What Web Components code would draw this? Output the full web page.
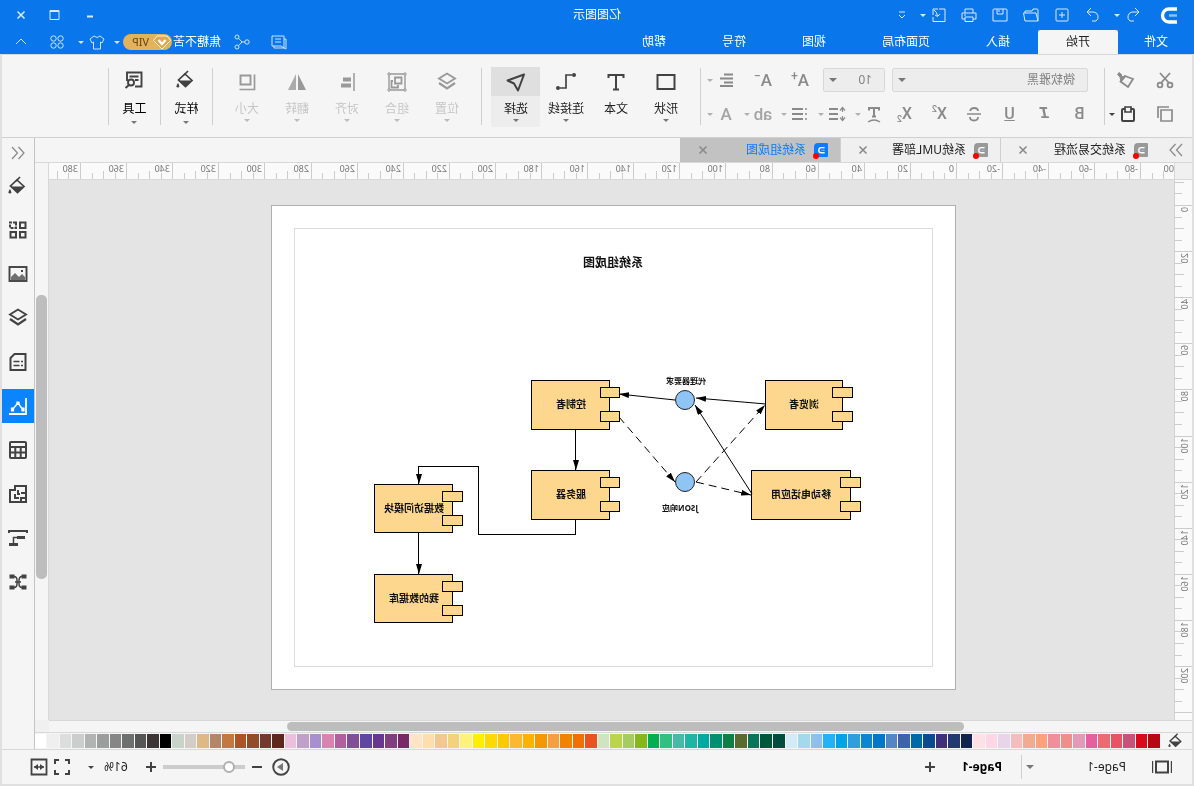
<!DOCTYPE html>
<html lang="zh-CN">
<head>
<meta charset="utf-8">
<title>亿图图示</title>
<style>
html, body { margin: 0; height: 100%; }
body { font: 12px/16px "Noto Sans", "Noto Sans CJK SC", sans-serif; color: #222; background: #f5f5f5; overflow: hidden; }
</style>
</head>
<body>
<diagram-app></diagram-app>
<script>
const ICONS = {
  logo: '<path d="M1 4H9a6 6 0 0 1 0 13H1" stroke="#fff" stroke-width="3.4"/><path d="M1 10.500h8" stroke="#8cc4fb" stroke-width="2.400"/>',
  undo: '<path d="M8 3L4 7l4 4M4 7h7a5 5 0 0 1 2 9H9"/>',
  redo: '<path d="M12 3l4 4-4 4M16 7H9a5 5 0 0 0-2 9h4"/>',
  plusbox: '<rect x="4" y="4" width="12" height="12" rx="1"/><path d="M10 7v6M7 10h6"/>',
  open: '<path d="M3 16V5q0-1 1-1h4l1 2h7v2M3 16L5 8h12.500L16 16z"/>',
  save: '<path d="M4 4h12q1 0 1 1v11H3V5q0-1 1-1zM7 4v5h6V4M11 5v2"/>',
  print: '<path d="M6 8V4h8v4M6 14H3V8h14v6h-3M6 12h8v4.500H6zM13 10h2"/>',
  exportbox: '<path d="M10 4H4v12.500h12V12M16 4v6M16 4h-5M15 5q-3 2-3.500 6M9 9l2.500 2.500L14 10"/>',
  more: '<path d="M7 7h6M7 10l3 3 3-3"/>',
  min: '<path d="M7 11.500h6" stroke-width="2"/>',
  max: '<path d="M5 5.500h9v9H5z"/><path d="M5 6h9" stroke-width="2"/>',
  close: '<path d="M6.500 6.500l7 7M13.500 6.500l-7 7" stroke-width="1.500"/>',
  chat: '<path d="M5 4h12v10H8l-3 2zM8 7h6M8 10h6M5 7H3v10l2-1h10v-2"/>',
  share: '<circle cx="5" cy="10" r="2.200"/><circle cx="15" cy="5" r="2"/><circle cx="15" cy="15" r="2"/><path d="M7 10h3l3.500-3.700M10 10l3.500 3.700"/>',
  shirt: '<path d="M7 4L3 7l2 4 1.500-1v7h7v-7l1.500 1 2-4-4-3q-3 3-6 0z"/>',
  clover: '<circle cx="6.500" cy="6.500" r="2.700"/><circle cx="13.500" cy="6.500" r="2.700"/><circle cx="6.500" cy="13.500" r="2.700"/><circle cx="13.500" cy="13.500" r="2.700"/>',
  up: '<path d="M5 12l5-5 5 5"/>',
  gem: '<path d="M5 4h10l3.500 4.500L10 17 1.500 8.500z" fill="#dfa94c" stroke="#fff3d6"/><path d="M6.500 8l3.500 4 3.500-4" stroke="#fff" stroke-width="2.200"/>',
  cut: '<path d="M5 3l9 10M15 3L6 13" stroke-width="1.800"/><circle cx="5" cy="15" r="2.400" stroke-width="1.800"/><circle cx="15" cy="15" r="2.400" stroke-width="1.800"/>',
  brush: '<path d="M3 9l8-3 4.500 5.500L8 17z" stroke-width="1.800"/><path d="M10 6l5 6 1-5zM14 5l3-2.500 1.500 2L16 7z" fill="currentColor"/>',
  copy: '<path d="M3 6h11v11H3z" stroke-width="1.700"/><path d="M6 3h11v11" stroke-width="1.700"/>',
  paste: '<rect x="4" y="5" width="12" height="12" rx="1" stroke-width="2"/><path d="M7 5V3h6v5H7z" fill="#f5f5f5" stroke-width="1.700"/>',
  alignleft: '<path d="M3 4.500h9M3 8.500h13M3 12.500h9M3 16h13" stroke-width="1.800"/>',
  linespace: '<path d="M9 5h9M9 10h9M9 15h9" stroke-width="1.800"/><path d="M4.500 4v4M4.500 12v4M2 6.500l2.500-3 2.500 3M2 13.500l2.500 3 2.500-3" stroke-width="1.200"/>',
  bullets: '<path d="M7 5h11M7 10h11M7 15h11" stroke-width="1.800"/><path d="M3 5h2M3 10h2M3 15h2" stroke-width="1.500"/>',
  strike: '<path d="M14 7q-1-3-4-3-4 0-4 3M6 13q0 3.500 4 3.500t4-3.500" stroke-width="1.800"/><path d="M3 10h14" stroke-width="1.500"/>',
  tarc: '<path d="M5 6.500V4h10v2.500M10 4v9M8 12.500h4" stroke-width="2"/><path d="M4 18q6-4 12 0" stroke-width="1.500"/>',
  rect: '<path d="M1.500 3h17v14h-17z" stroke-width="2"/>',
  text: '<path d="M2.500 6V3h15v3M10 3v14M7 17.500h6" stroke-width="2"/>',
  link: '<path d="M4 3h6v13h6" stroke-width="1.700"/><circle cx="2" cy="3" r="2" fill="currentColor" stroke="none"/><circle cx="18" cy="16" r="2" fill="currentColor" stroke="none"/>',
  cursor: '<path d="M2 2.500L18.500 8.500 12 11.500 8 18.500z" stroke-width="2" stroke-linejoin="round"/>',
  layers: '<path d="M10 1.500l8 5-8 5-8-5z" stroke-width="1.900"/><path d="M2 11l8 5.500 8-5.500" stroke-width="2.200"/>',
  group: '<path d="M2 2h16v16H2z" stroke-width="1.400"/><path d="M5.500 5.500h6.500v6H5.500z" stroke-width="1.800"/><path d="M14 9h1.500v6.500H9V13" stroke-width="1.800"/><path d="M1 1h2v2H1zM17 1h2v2h-2zM1 17h2v2H1zM17 17h2v2h-2z" fill="#f5f5f5" stroke-width="1"/>',
  align: '<path d="M3 1v18" stroke-width="1.500"/><path d="M6 7.500h8M6 13.500h10" stroke-width="4"/>',
  flip: '<path d="M11 2v16h8z" fill="currentColor" stroke="none" opacity=".8"/><path d="M9 2v16H1z" fill="currentColor" stroke="none"/>',
  size: '<path d="M6.500 3.500h10v9h-10z" stroke-width="1.900"/><path d="M2.500 2.500v15h15" stroke-width="1.700"/>',
  bucket: '<path d="M11 4L4 10.500l6.500 6L17.500 10z" stroke-width="1.700"/><path d="M4.500 10.500h13l-7 6.500z" fill="currentColor" stroke="none"/><path d="M8 1l4 4" stroke-width="1.700"/><path d="M18 13q3 4 0 4.500-2.500-.5 0-4.500z" fill="currentColor" stroke="none"/>',
  tools: '<path d="M17 11V2.500H2.500v14H9M5.500 6.500h9M5.500 10H9" stroke-width="1.900"/><circle cx="13" cy="12.500" r="3" stroke-width="1.900"/><path d="M15 15l3.500 3" stroke-width="2"/>',
  tiles: '<path d="M2.500 2.500h5.500v5.500H2.500zM2.500 12h5.500v5.500H2.500zM12 12h5.500v5.500H12z" stroke-width="2"/><path d="M12 2.500h6v5.500h-6z" stroke-width="2" stroke-dasharray="3 1"/>',
  image: '<rect x="1.500" y="3" width="17" height="14" stroke-width="1.900"/><path d="M3 16v-3l3-3 3 3 4-4 4 4v3z" fill="currentColor" stroke="none" opacity=".75"/><path d="M5 6h2v2H5z" fill="currentColor" stroke="none"/>',
  doc: '<path d="M2.500 2h11l4 4v12h-15z" stroke-width="2"/><path d="M5 9.500h2M8.500 9.500h6M5 13.500h2M8.500 13.500h6" stroke-width="1.700"/>',
  chart: '<path d="M2 2v16h17" stroke-width="1.800"/><path d="M5 14l5-7 6 7" stroke-width="1.400"/><path d="M5 11.500v4M10 5.500v3.500M15.500 11.500v4" stroke-width="3.200"/>',
  table: '<rect x="2" y="2" width="16" height="16" rx="1" stroke-width="2"/><path d="M2 7h16M2 12.500h16M7.300 7v11M12.700 7v11" stroke-width="2"/>',
  plan: '<path d="M2 2h11v4h5v12H2zM2 9h5M2 14h5v4M10 6v4h-2M13 10v4h-4" stroke-width="2"/>',
  tree: '<path d="M1 5V3h18v2" stroke-width="2"/><path d="M3 9.500h8M10 16.500h9" stroke-width="2.800"/><path d="M11 9.500h3.500v6" stroke-width="1.500"/>',
  mind: '<path d="M1.500 4.500h5M13.500 4.500h5M1.500 15.500h5M13.500 15.500h5" stroke-width="4"/><path d="M6 4.500q3 0 3 4v3q0 4-3 4M14 4.500q-3 0-3 4v3q0 4 3 4M7 10h6" stroke-width="1.500"/>',
  dblright: '<path d="M4 4l5.500 6L4 16M10.500 4l5.500 6-5.500 6" stroke-width="1.200"/>',
  dblleft: '<path d="M16 4l-5.500 6 5.500 6M9.500 4L4 10l5.500 6" stroke-width="1.200"/>',
  pages: '<path d="M4 4.500h12v11H4z" stroke-width="2"/><path d="M0 4v12M20 4v12" stroke-width="2.400"/>',
  plus: '<path d="M10 5v10M5 10h10" stroke-width="2"/>',
  minus: '<path d="M5 10h10" stroke-width="2"/>',
  play: '<circle cx="10" cy="10" r="7.800" stroke-width="1.900"/><path d="M8 6l6 4-6 4z" fill="#777" stroke="none"/>',
  full: '<path d="M3 7V3h4M13 3h4v4M17 13v4h-4M7 17H3v-4" stroke-width="2"/>',
  fit: '<path d="M2.500 2.500h15v15h-15z" stroke-width="1.800"/><path d="M5 10h10" stroke-width="1.500"/><path d="M9 7v6l-4-3zM11 7v6l4-3z" fill="currentColor" stroke="none"/>'
};

function define(name, css, html, setup) {
  const template = document.createElement('template');
  template.innerHTML = '<style>*{box-sizing:border-box}button,select,input{font:inherit;color:inherit;margin:0}button{background:none;border:0;padding:0;display:flex;align-items:center;justify-content:center}' + css + '</style>' + html;
  customElements.define(name, class extends HTMLElement {
    constructor() {
      super();
      this.attachShadow({ mode: 'open' }).append(template.content.cloneNode(true));
    }
    connectedCallback() { if (setup) setup(this, this.shadowRoot); }
  });
}

define('app-icon', ':host{display:block;width:20px;height:20px;flex:none}svg{display:block;width:100%;height:100%}',
  '<svg viewBox="0 0 20 20" fill="none" stroke="currentColor" aria-hidden="true"></svg>',
  (el, root) => { root.querySelector('svg').innerHTML = ICONS[el.getAttribute('name')]; });

define('drop-caret', ':host{display:block;width:0;height:0;flex:none;border:3px solid transparent;border-top-color:currentColor;border-bottom:0}', '');

/* ---------- header ---------- */
define('title-bar', `
  :host{display:grid;grid-template-columns:1fr auto 1fr;align-items:center;height:30px;color:#d9eafd}
  div{display:flex;align-items:center}
  .quick{padding-left:16px}
  .quick button{width:31px;height:28px}
  .quick .mark{width:20px;margin-right:14px}
  .quick .pair{width:36px;justify-content:flex-start;padding-left:1px}
  .quick .pair drop-caret{margin-left:3px}
  .quick .wide{width:40px;padding-left:5px;justify-content:flex-start}
  .quick .wide drop-caret{margin-left:3px}
  .window{justify-content:flex-end;padding-right:6px}
  .window button{width:36px;height:28px}
  h1{margin:0;font-size:12px;font-weight:400;color:#fff}
`, `
  <div class="quick">
    <app-icon class="mark" name="logo"></app-icon>
    <button class="pair" aria-label="撤销"><app-icon name="undo"></app-icon><drop-caret></drop-caret></button>
    <button aria-label="重做" style="width:30px"><app-icon name="redo"></app-icon></button>
    <button aria-label="新建"><app-icon name="plusbox"></app-icon></button>
    <button aria-label="打开"><app-icon name="open"></app-icon></button>
    <button aria-label="保存"><app-icon name="save"></app-icon></button>
    <button aria-label="打印"><app-icon name="print"></app-icon></button>
    <button class="wide" aria-label="导出"><app-icon name="exportbox"></app-icon><drop-caret></drop-caret></button>
    <button aria-label="更多" style="width:24px"><app-icon name="more"></app-icon></button>
  </div>
  <h1>亿图图示</h1>
  <div class="window">
    <button aria-label="最小化"><app-icon name="min"></app-icon></button>
    <button aria-label="最大化"><app-icon name="max"></app-icon></button>
    <button aria-label="关闭" style="width:30px"><app-icon name="close"></app-icon></button>
  </div>`);

define('menu-bar', `
  :host{display:flex;height:24px;color:#fff;justify-content:space-between;padding-right:11px}
  nav,.user{display:flex;align-items:center}
  nav button{height:24px;padding:0 28px}
  nav button:first-child{padding:0 26px}
  nav button.on{background:#f5f5f5;color:#222;border-radius:2px 2px 0 0}
  .user{color:#cfe4fc}
  .user span{color:#fff;margin:0 1px 0 11px}
  .user button{height:22px}
  .vip{display:flex;align-items:center;width:49px;height:16px;border-radius:8px;background:#e3b25c;color:#6b4410}
  .vip b{font-weight:400;padding-left:3px;font-size:11px}
`, `
  <nav>
    <button>文件</button><button class="on">开始</button><button>插入</button><button>页面布局</button><button>视图</button><button>符号</button><button>帮助</button>
  </nav>
  <div class="user">
    <button aria-label="消息" style="width:37px;margin-right:8px"><app-icon name="chat"></app-icon></button>
    <button aria-label="分享"><app-icon name="share"></app-icon></button>
    <span>焦糖不苦</span>
    <div class="vip"><app-icon name="gem"></app-icon><b>VIP</b></div>
    <drop-caret style="margin-left:3px"></drop-caret>
    <button aria-label="皮肤" style="margin-left:7px"><app-icon name="shirt"></app-icon></button>
    <drop-caret style="margin:0 11px 0 3px"></drop-caret>
    <button aria-label="应用"><app-icon name="clover"></app-icon></button>
    <button aria-label="收起" style="margin-left:16px"><app-icon name="up"></app-icon></button>
  </div>`);

/* ---------- ribbon ---------- */
define('ribbon-button', `
  :host{display:block;width:50px;color:#424242}
  button{flex-direction:column;justify-content:flex-start;width:49px;height:60px;margin:0 auto;border-radius:2px}
  .pic{display:flex;align-items:center;justify-content:center;width:100%;height:29px}
  .label{margin-top:5px;line-height:16px;white-space:nowrap;color:#222}
  drop-caret{margin-top:2px;color:#777}
  :host([disabled]){color:#999}
  :host([disabled]) .label{color:#c6c6c6}
  :host([disabled]) drop-caret{color:#bbb}
  :host([on]) button{background:#ededed}
  :host([on]) .pic{background:#dfdfdf}
  :host([plain]) drop-caret{visibility:hidden}
  :host([single]){width:51px}
  :host([single]) .pic{height:25px}
  :host([single]) .label{margin-top:9px;color:#000}
  :host([single]) drop-caret{margin-top:4px}
`, '<button><span class="pic"></span><span class="label"><slot></slot></span><drop-caret></drop-caret></button>',
  (el, root) => {
    root.querySelector('.pic').innerHTML = '<app-icon name="' + el.getAttribute('icon') + '"></app-icon>';
    root.querySelector('button').disabled = el.hasAttribute('disabled');
  });

define('ribbon-bar', `
  :host{display:flex;height:84px;border-top:1px solid #d8d8d8;border-bottom:1px solid #d0d0d0;background:#f5f5f5;padding:12px 0 0 10px;color:#8a8a8a}
  .sep{width:1px;height:57px;margin-top:1px;background:#cfcfcf;flex:none}
  .clip{display:grid;grid-template-columns:35px 42px;grid-template-rows:26px 26px;row-gap:8px;width:77px}
  .clip button{justify-content:flex-start;padding-left:7px}
  .clip button:nth-child(even){padding-left:11px}
  .clip .dark{padding-left:9px}
  .clip .dark drop-caret{margin-left:3px}
  .font{width:403px;padding-left:7px}
  .row{display:flex;align-items:center;height:26px;margin-bottom:8px}
  .pick{position:relative;display:block;height:24px}
  .pick drop-caret{position:absolute;right:6px;top:10px;border-width:4px;border-bottom:0;color:#777}
  select{appearance:none;width:100%;height:24px;border:1px solid #d8d8dc;border-radius:2px;background:#ededed;color:#808080;padding:0 12px;outline:0}
  .family{width:196px;margin-left:9px}.points{width:62px;margin:0 10px 0 7px}
  .points select{padding-left:12px}
  .fmt{width:35px;height:26px;font:500 16px/20px Roboto,"Noto Sans",sans-serif}
  .fmt i{font:italic 700 17px/20px "Liberation Mono",monospace}
  .fmt sup,.fmt sub{font-size:9px;line-height:9px}
  .fmt sup{align-self:flex-start;margin-top:4px}.fmt sub{align-self:flex-end;margin-bottom:3px}
  .cell{width:37px;height:26px;display:flex;align-items:center;justify-content:flex-start}
  .cell>span,.cell>app-icon{width:20px;margin:0 3px;flex:none;text-align:center;white-space:nowrap}
  .cell>span{font:500 17px/22px Roboto,"Noto Sans",sans-serif}
  .cell sup{font-size:12px;line-height:8px;vertical-align:6px}
  .cell drop-caret{color:#b0b0b0}
  .light{color:#a4a4a4}
  .dark{color:#424242}
  .group{display:flex}
`, `
  <div class="clip">
    <button aria-label="剪切"><app-icon name="cut"></app-icon></button>
    <button aria-label="格式刷"><app-icon name="brush"></app-icon></button>
    <button aria-label="复制"><app-icon name="copy"></app-icon></button>
    <button class="dark" aria-label="粘贴" style="padding-left:9px"><app-icon name="paste"></app-icon><drop-caret></drop-caret></button>
  </div>
  <div class="sep"></div>
  <div class="font">
    <div class="row">
      <label class="pick family"><select aria-label="字体"><option>微软雅黑</option></select><drop-caret></drop-caret></label>
      <label class="pick points"><select aria-label="字号"><option>10</option></select><drop-caret></drop-caret></label>
      <button class="cell" aria-label="增大字号"><span>A<sup>+</sup></span></button>
      <button class="cell" aria-label="减小字号"><span>A<sup>−</sup></span></button>
      <button class="cell" aria-label="对齐文本"><app-icon name="alignleft"></app-icon><drop-caret></drop-caret></button>
    </div>
    <div class="row">
      <button class="fmt">B</button><button class="fmt"><i>I</i></button><button class="fmt"><u>U</u></button><button class="fmt" aria-label="删除线"><app-icon name="strike"></app-icon></button>
      <button class="fmt">X<sup>2</sup></button><button class="fmt">X<sub>2</sub></button>
      <button class="cell" aria-label="艺术字"><app-icon name="tarc"></app-icon><drop-caret></drop-caret></button>
      <button class="cell" aria-label="行距"><app-icon name="linespace"></app-icon><drop-caret></drop-caret></button>
      <button class="cell" aria-label="项目符号"><app-icon name="bullets"></app-icon><drop-caret></drop-caret></button>
      <button class="cell light"><span>ab</span><drop-caret></drop-caret></button>
      <button class="cell light"><span>A</span><drop-caret></drop-caret></button>
    </div>
  </div>
  <div class="sep"></div>
  <div class="group" style="padding:0 9px">
    <ribbon-button icon="rect">形状</ribbon-button>
    <ribbon-button icon="text" plain>文本</ribbon-button>
    <ribbon-button icon="link">连接线</ribbon-button>
    <ribbon-button icon="cursor" on>选择</ribbon-button>
  </div>
  <div class="sep"></div>
  <div class="group" style="padding:0 9px">
    <ribbon-button icon="layers" disabled>位置</ribbon-button>
    <ribbon-button icon="group" disabled>组合</ribbon-button>
    <ribbon-button icon="align" disabled>对齐</ribbon-button>
    <ribbon-button icon="flip" disabled>翻转</ribbon-button>
    <ribbon-button icon="size" disabled>大小</ribbon-button>
  </div>
  <div class="sep"></div>
  <ribbon-button icon="bucket" single>样式</ribbon-button>
  <div class="sep"></div>
  <ribbon-button icon="tools" single>工具</ribbon-button>
  <div class="sep"></div>`);

/* ---------- document tabs ---------- */
define('doc-tab', `
  :host{display:flex;align-items:center;width:160px;height:24px;border-right:1px solid #cfcfcf;color:#222;padding:0 12px}
  :host([on]){background:#c2c2c2;color:#0a7cf5;border-color:#c2c2c2}
  .mark{position:relative;width:14px;height:14px;border-radius:1px 4px 1px 1px;background:#999;margin-right:8px;flex:none}
  :host([on]) .mark{background:#0a7cff}
  .mark app-icon{width:8px;height:8px;margin:3px}
  .mark::after{content:"";position:absolute;right:-1px;bottom:-2px;width:6px;height:6px;border-radius:3px;background:#f00}
  .name{flex:1;white-space:nowrap}
  button{color:#888}
`, '<span class="mark"><app-icon name="logo"></app-icon></span><span class="name"><slot></slot></span><button aria-label="关闭"><app-icon name="close"></app-icon></button>');

define('doc-tabs', `
  :host{display:flex;height:25px;border-bottom:1px solid #d8d8d8;background:#f5f5f5}
  .all{width:32px;color:#888;background:#f0f0f0}
  doc-tab:not([on]){background:#f0f0f0}
`, '<button class="all" aria-label="展开"><app-icon name="dblright"></app-icon></button><doc-tab>系统交易流程</doc-tab><doc-tab>系统UML部署</doc-tab><doc-tab on>系统组成图</doc-tab>');

/* ---------- rulers: 20 units every 46 pixels, redrawn when the length changes ---------- */
define('scale-ruler', `
  :host{display:block;overflow:hidden;background:#fafafa;min-width:0;min-height:0}
  svg{display:block;font:9px "Noto Sans",sans-serif}
`, '<svg shape-rendering="crispEdges"></svg>', (el, root) => {
  const down = el.hasAttribute('vertical');
  const zero = Number(el.getAttribute('zero'));
  const svg = root.querySelector('svg');
  const step = 876 / 76;
  const draw = () => {
    const length = down ? el.clientHeight : el.clientWidth;
    svg.setAttribute('width', down ? 17 : length);
    svg.setAttribute('height', down ? length : 16);
    let out = '';
    for (let i = -20; zero + i * step < length; i++) {
      const at = Math.round(zero + i * step);
      if (at < -14) continue;
      const tick = i % 4 === 0 ? 17 : i % 2 === 0 ? 9 : 7;
      if (at >= 0) out += down ? `<path d="M${17 - tick} ${at}h${tick}v1h-${tick}z" fill="#ccc"/>` : `<path d="M${at} ${17 - tick}h1v${tick}h-1z" fill="#ccc"/>`;
      if (i % 4 === 0 && at + 10 < length) {
        const label = at < 0 ? '00' : i * 5;
        out += down ? `<text fill="#777" transform="translate(4 ${at + 2}) rotate(90)">${label}</text>`
                    : `<text fill="#777" x="${Math.max(at + 3, 0)}" y="9">${label}</text>`;
      }
    }
    svg.innerHTML = out;
  };
  draw();
  new ResizeObserver(draw).observe(el);
});

/* ---------- drawing page ---------- */
const box = (x, y, w, h, label, tx, ty, tab) => `<g><rect x="${x}" y="${y}" width="${w}" height="${h}"/><rect x="${x - 10}" y="${y + 7}" width="${tab}" height="10"/><rect x="${x - 10}" y="${y + 31}" width="${tab}" height="10"/></g><text x="${tx}" y="${ty}">${label}</text>`;
define('drawing-page', `
  :host{display:block;box-sizing:border-box;width:685px;height:485px;background:#fff;border:1px solid #b0b0b0;flex:none}
  svg{display:block;width:683px;height:483px;font-weight:700;font-size:10px}
  rect{fill:#fed78f;stroke:#000}
  g{shape-rendering:crispEdges}
  text{text-anchor:middle;fill:#111}
  circle{fill:#8ec5f4;stroke:#222}
  .wire{fill:none;stroke:#000}
  .straight{shape-rendering:crispEdges}
  .dash{stroke-dasharray:8 5}
  .margin{fill:none;stroke:#dcdcdc;shape-rendering:crispEdges}
`, `<svg viewBox="0 1 683 483">
  <defs><marker id="tip" viewBox="0 0 10 6" refX="10" refY="3" markerWidth="10" markerHeight="6" markerUnits="userSpaceOnUse" orient="auto"><path d="M0 0l10 3-10 3z"/></marker></defs>
  <rect class="margin" x="22" y="23" width="638" height="438"/>
  <text x="342" y="62" font-size="12">系统组成图</text>
  ${box(112, 175, 77, 49, '浏览者', 151, 203, 20)}
  ${box(104, 265, 99, 49, '移动电话应用', 154, 293, 20)}
  ${box(345, 175, 78, 49, '控制者', 384, 203, 19)}
  ${box(345, 265, 78, 49, '服务器', 384, 293, 19)}
  ${box(502, 279, 78, 48, '数据访问模块', 541, 307, 20)}
  ${box(502, 369, 78, 48, '我的数据库', 541, 397, 20)}
  <circle cx="270" cy="195" r="9.500"/><circle cx="270" cy="277" r="9.500"/>
  <text x="269" y="179" font-size="8">代理器要求</text>
  <text x="275" y="306" font-size="8">JSON响应</text>
  <path class="wire" marker-end="url(#tip)" d="M189 199L259 193"/>
  <path class="wire" marker-end="url(#tip)" d="M280 195L336 189"/>
  <path class="wire" marker-end="url(#tip)" d="M203 289L260 200"/>
  <path class="wire dash" marker-end="url(#tip)" d="M336 212L280 277"/>
  <path class="wire dash" marker-end="url(#tip)" d="M259 277L190 200"/>
  <path class="wire dash" marker-end="url(#tip)" d="M259 277L204 290"/>
  <path class="wire straight" marker-end="url(#tip)" d="M379 224V265"/>
  <path class="wire straight" marker-end="url(#tip)" d="M379 314V329H476V261H536V279"/>
  <path class="wire straight" marker-end="url(#tip)" d="M536 327V369"/>
</svg>`);

define('scroll-track', `
  :host{display:flex;background:#f5f5f5;padding:1px}
  :host([vertical]){flex-direction:column}
  i{display:block;flex:var(--before) 0 0}
  i+i{flex:var(--thumb) 0 0;background:#bdbdbd;border-radius:5px}
  i+i+i{flex:var(--after) 0 0;background:none}
`, '<i></i><i></i><i></i>');

const COLORS = '#b50814 #d90a1e #c9527a #e95465 #ea6b74 #e65f9f #e29ab7 #ef8f8a #f08f9c #ffa27c #f2ab93 #f5bcbd #e9d5e9 #ffd6e6 #ffe0e6 #13234f #233a70 #40307a #0a4a91 #006aa8 #3f62ae #5486c5 #0078c8 #0c86d4 #2e9edc #00a4e4 #22b2f5 #8ec0ea #a4d8ec #d2ebf5 #004d3d #00583c #0a7558 #5b6a2f #0f8045 #009070 #00aaa0 #1fb5a5 #48b8a8 #30c080 #00b050 #86b81b #a4cc60 #bcd44a #d0e4c0 #e9541e #f07000 #f08300 #f4a040 #f39800 #fab400 #fbb830 #fcc800 #ffd900 #ffee00 #fff27c #f2d27c #f0c890 #ffdead #ffe4c8 #7a2868 #804080 #683890 #6048a0 #804f98 #b0609c #d884b0 #a890d0 #c0a0c8 #ecc0dc #5c281c #743a30 #924c2a #a85528 #c27840 #b3866c #deb887 #d4ccc8 #c8d3c9 #000000 #3c3535 #565555 #6e6f6f #868686 #9c9e9d #b2b4b3 #cccecd #dcdddd #efefef #ffffff'.split(' ');
define('color-strip', `
  :host{display:flex;align-items:center;height:17px;border-top:1px solid #d8d8d8;background:#f5f5f5;padding:0 0 0 8px}
  app-icon{width:16px;height:16px;margin-right:8px;color:#424242}
  div{flex:1;display:flex;gap:1px;height:14px}
  i{flex:1}
`, '<app-icon name="bucket"></app-icon><div></div>', (el, root) => {
  root.querySelector('div').innerHTML = COLORS.map(c => `<i style="background:${c}"></i>`).join('');
});

define('side-rail', `
  :host{display:flex;flex-direction:column;align-items:stretch;width:33px;border-left:1px solid #c4c4c4;background:#f5f5f5;color:#424242}
  button{height:34px;margin-bottom:10px;flex:none}
  button:first-of-type{height:30px;margin-bottom:1px;color:#888}
  .on{background:#0a84ff;color:#fff}
`, '<button aria-label="收起"><app-icon name="dblleft"></app-icon></button>' +
  [['bucket', '填充'], ['tiles', '主题'], ['image', '图片'], ['layers', '图层'], ['doc', '属性'], ['chart', '图表'], ['table', '表格'], ['plan', '平面图'], ['tree', '大纲'], ['mind', '导图']]
    .map(([n, t]) => `<button class="${n === 'chart' ? 'on' : ''}" aria-label="${t}"><app-icon name="${n}"></app-icon></button>`).join(''));

define('status-bar', `
  :host{display:flex;align-items:center;height:35px;border-top:1px solid #d8d8d8;background:#f5f5f5;color:#424242;padding:0 27px 0 20px}
  select{appearance:none;border:0;background:none;color:#222;padding:0;width:92px;outline:0}
  .page{display:flex;align-items:center;width:104px;margin-left:26px}
  .page drop-caret{border-width:4px;border-bottom:0;color:#777}
  .sep{width:1px;height:24px;background:#d0d0d0;margin-right:19px}
  .tab{color:#000;font-weight:700;margin-right:22px}
  .gap{flex:1}
  input{appearance:none;width:82px;height:12px;margin:0 2px;background:linear-gradient(#ccc,#ccc) center/100% 4px no-repeat}
  input::-webkit-slider-thumb{appearance:none;width:12px;height:12px;border-radius:6px;border:2px solid #b0b0b0;background:#fff}
  output{color:#222;margin:0 10px 0 13px}
`, `
  <button aria-label="页面列表"><app-icon name="pages"></app-icon></button>
  <label class="page"><select aria-label="页面"><option>Page-1</option></select><drop-caret></drop-caret></label>
  <span class="sep"></span>
  <button class="tab">Page-1</button>
  <button aria-label="添加页面"><app-icon name="plus"></app-icon></button>
  <span class="gap"></span>
  <button aria-label="演示"><app-icon name="play"></app-icon></button>
  <button aria-label="缩小" style="margin-left:4px"><app-icon name="minus"></app-icon></button>
  <input type="range" min="0" max="100" value="14" aria-label="缩放">
  <button aria-label="放大"><app-icon name="plus"></app-icon></button>
  <output>61%</output>
  <drop-caret></drop-caret>
  <button aria-label="全屏" style="margin:0 3px 0 16px"><app-icon name="full"></app-icon></button>
  <button aria-label="适合宽度"><app-icon name="fit"></app-icon></button>`);

/* The whole workspace is flipped left to right, text included. */
define('diagram-app', `
  :host{display:flex;flex-direction:column;height:100vh;transform:scaleX(-1)}
  header{background:#0977eb}
  .body{flex:1;min-height:0;display:flex;flex-direction:column;border:2px solid #e0e0e0;border-top:0}
  .work{flex:1;min-height:0;display:flex}
  .editor{flex:1;min-width:0;display:grid;grid-template-columns:18px 1fr 14px;grid-template-rows:auto 17px minmax(0,1fr) 12px auto}
  doc-tabs,color-strip{grid-column:1/-1}
  .corner{background:#f0f0f0;border-right:1px solid #d8d8d8;border-bottom:1px solid #d8d8d8}
  .across{border-bottom:1px solid #d8d8d8}
  .down{border-right:1px solid #d0d0d0}
  .canvas{background:#e4e4e4;overflow:hidden;padding:25px 0 0 218px}
  .v{grid-column:3;grid-row:2/4;border-left:1px solid #d8d8d8;--before:131;--thumb:285;--after:141}
  .h{grid-column:1/3;border-top:1px solid #d8d8d8;--before:228;--thumb:678;--after:238}
  .blank{background:#f0f0f0}
`, `
  <header><title-bar></title-bar><menu-bar></menu-bar></header>
  <div class="body">
    <ribbon-bar></ribbon-bar>
    <div class="work">
      <main class="editor">
        <doc-tabs></doc-tabs>
        <div class="corner"></div>
        <scale-ruler class="across" zero="217"></scale-ruler>
        <scroll-track class="v" vertical></scroll-track>
        <scale-ruler class="down" vertical zero="25"></scale-ruler>
        <div class="canvas"><drawing-page></drawing-page></div>
        <scroll-track class="h"></scroll-track>
        <div class="blank"></div>
        <color-strip></color-strip>
      </main>
      <side-rail></side-rail>
    </div>
    <status-bar></status-bar>
  </div>`);
</script>
</body>
</html>
